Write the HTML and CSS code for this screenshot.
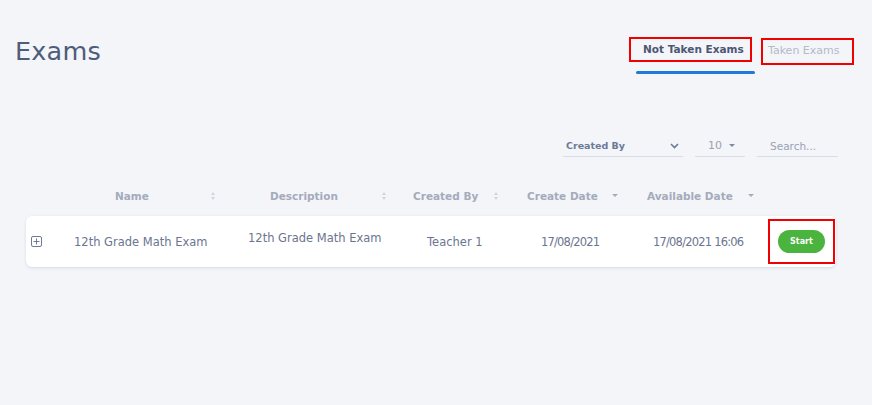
FILE: index.html
```html
<!DOCTYPE html>
<html>
<head>
<meta charset="utf-8">
<link rel="stylesheet" href="styles.css">
</head>
<body>
<div class="page">
  <div class="top">
    <h1 class="title">Exams</h1>
    <div class="tabs">
      <div class="tab-wrap">
        <div class="tab tab-active">Not Taken Exams</div>
        <div class="tab-line"></div>
      </div>
      <div class="tab tab-inactive">Taken Exams</div>
    </div>
  </div>

  <div class="filters">
    <div class="select sel-created">
      <span>Created By</span>
      <svg class="chev" width="9" height="6" viewBox="0 0 9 6"><path d="M1 1l3.5 3.5L8 1" fill="none" stroke="#6c7a96" stroke-width="1.6"/></svg>
    </div>
    <div class="select sel-count">
      <span>10</span>
      <span class="caret"></span>
    </div>
    <div class="select sel-search">
      <span>Search...</span>
    </div>
  </div>

  <div class="table">
    <div class="thead">
      <div class="th c0"></div>
      <div class="th c1"><span>Name</span><span class="sort"></span></div>
      <div class="th c2"><span>Description</span><span class="sort"></span></div>
      <div class="th c3"><span>Created By</span><span class="sort"></span></div>
      <div class="th c4"><span>Create Date</span><span class="caret hcaret"></span></div>
      <div class="th c5"><span>Available Date</span><span class="caret hcaret"></span></div>
      <div class="th c6"></div>
    </div>
    <div class="row">
      <div class="td d0">
        <svg width="11" height="11" viewBox="0 0 11 11"><rect x="0.5" y="0.5" width="10" height="10" rx="1.5" fill="none" stroke="#6f7a93"/><path d="M5.5 2.5v6M2.5 5.5h6" stroke="#6f7a93"/></svg>
      </div>
      <div class="td d1">12th Grade Math Exam</div>
      <div class="td d2">12th Grade Math Exam</div>
      <div class="td d3">Teacher 1</div>
      <div class="td d4 num">17/08/2021</div>
      <div class="td d5 num">17/08/2021 16:06</div>
      <div class="td d6"><div class="mark"><button class="start">Start</button></div></div>
    </div>
  </div>
</div>
</body>
</html>
```
FILE: styles.css
```css
* { box-sizing: border-box; }
html, body { margin: 0; padding: 0; }
body {
  background: #f3f5f9;
  font-family: "DejaVu Sans", "Noto Sans", sans-serif;
  width: 872px;
  height: 405px;
  overflow: hidden;
}

.top {
  display: flex;
  justify-content: space-between;
  align-items: flex-start;
  padding: 37px 18px 0 15px;
  height: 75px;
}
.title {
  margin: 0;
  font-weight: 400;
  font-size: 25.5px;
  line-height: 28px;
  color: #4f5d7b;
  letter-spacing: 0.2px;
}
.tabs { display: flex; align-items: flex-start; }
.tab-wrap { display: flex; flex-direction: column; }
.tab {
  border: 2px solid #f00000;
  font-size: 10.5px;
  line-height: 21px;
  white-space: nowrap;
}
.tab-active {
  width: 123px;
  height: 25px;
  padding-left: 12px;
  font-weight: 700;
  color: #4b5875;
}
.tab-line {
  width: 119px;
  height: 3px;
  margin: 9px 0 0 7px;
  background: #2179d8;
  border-radius: 2px;
}
.tab-inactive {
  width: 93px;
  height: 27px;
  margin: 1px 0 0 6px;
  padding-left: 5px;
  line-height: 22px;
  font-size: 11px;
  color: #b4bac8;
}

.filters {
  display: flex;
  justify-content: flex-end;
  padding: 60px 34px 0 0;
  height: 100px;
  align-items: flex-start;
  gap: 12px;
}
.select {
  height: 22px;
  border-bottom: 1px solid #d9dde5;
  display: flex;
  align-items: center;
  font-size: 10.5px;
  color: #6c7a96;
}
.sel-created { width: 120px; padding: 0 4px 0 3px; justify-content: space-between; font-weight: 600; font-size: 9.5px; }
.sel-count { width: 50px; padding-left: 13px; gap: 7px; color: #9aa2b3; font-size: 11px; }
.sel-search { width: 81px; padding-left: 13px; color: #9aa2b3; font-size: 10.5px; }
.caret {
  width: 0; height: 0;
  border-left: 3px solid transparent;
  border-right: 3px solid transparent;
  border-top: 3px solid #7e899f;
}

.table { padding: 0 36px 0 26px; }
.thead, .row {
  display: grid;
  grid-template-columns: 34px 180px 165px 110px 120px 125px 76px;
}
.thead { height: 41px; align-items: center; }
.th {
  display: flex;
  align-items: center;
  font-size: 10.5px;
  color: #a4abbb;
  font-weight: 600;
  white-space: nowrap;
}
.th span:first-child { flex: none; }
.c1 { padding: 0 24px 0 55px; }
.c2 { padding: 0 18px 0 30px; }
.c3 { padding: 0 16px 0 8px; }
.c4 { padding: 0 17px 0 12px; }
.c5 { padding: 0 6px 0 12px; }
.th .sort, .th .hcaret { margin-left: auto; }
.sort {
  width: 5px; height: 8px;
  position: relative;
}
.sort::before, .sort::after {
  content: "";
  position: absolute;
  left: 0;
  border-left: 2.5px solid transparent;
  border-right: 2.5px solid transparent;
}
.sort::before { top: 0; border-bottom: 3px solid #cfd4de; }
.sort::after { bottom: 0; border-top: 3px solid #cfd4de; }
.hcaret { border-top-color: #a4abbb; }

.row {
  height: 51px;
  background: #fff;
  border-radius: 6px;
  box-shadow: 0 1px 3px rgba(120, 140, 180, 0.25);
  align-items: center;
}
.td {
  font-size: 11.5px;
  color: #6b7590;
  white-space: nowrap;
}
.num { letter-spacing: -0.8px; }
.d0 { padding-left: 5px; display: flex; align-items: center; }
.d1 { padding-left: 14px; }
.d2 { padding-left: 8px; margin-top: -8px; }
.d3 { padding-left: 22px; }
.d4 { padding-left: 26px; }
.d5 { padding-left: 18px; }
.d6 { padding-left: 8px; }
.mark {
  width: 67px;
  height: 45px;
  border: 2px solid #f00000;
  display: flex;
  align-items: center;
  padding-left: 8px;
}
.start {
  width: 47px;
  height: 23px;
  border: none;
  border-radius: 12px;
  background: #4bb43f;
  color: #fff;
  font-family: "DejaVu Sans", sans-serif;
  font-weight: 700;
  font-size: 8px;
  padding: 0;
}
```
